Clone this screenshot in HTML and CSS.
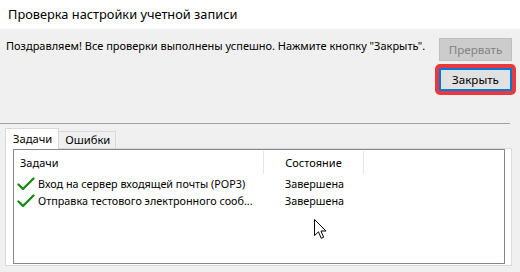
FILE: index.html
```html
<!DOCTYPE html>
<html lang="ru">
<head>
<meta charset="utf-8">
<title>Проверка настройки учетной записи</title>
<link rel="stylesheet" href="styles.css">
</head>
<body>
<div class="window">
  <div class="titlebar">Проверка настройки учетной записи</div>
  <div class="top">
    <div class="message">Поздравляем! Все проверки выполнены успешно. Нажмите кнопку "Закрыть".</div>
    <div class="buttons">
      <button class="btn btn-disabled" disabled>Прервать</button>
      <button class="btn btn-default highlighted">Закрыть</button>
    </div>
  </div>
  <div class="separator"></div>
  <div class="tabs">
    <div class="tab tab-active">Задачи</div>
    <div class="tab">Ошибки</div>
  </div>
  <div class="panel">
    <div class="listview">
      <div class="lv-header">
        <div class="col col-task">Задачи</div>
        <div class="col col-state">Состояние</div>
        <div class="col col-rest"></div>
      </div>
      <div class="lv-row">
        <div class="col col-task">
          <svg class="check" viewBox="0 0 18 14" width="18" height="14"><path d="M1.5 7.5 L6 12 L16.5 1.5" fill="none" stroke="#1b8a1b" stroke-width="2.4" stroke-linecap="round" stroke-linejoin="round"/></svg>
          <span class="task-name">Вход на сервер входящей почты (POP3)</span>
        </div>
        <div class="col col-state">Завершена</div>
      </div>
      <div class="lv-row">
        <div class="col col-task">
          <svg class="check" viewBox="0 0 18 14" width="18" height="14"><path d="M1.5 7.5 L6 12 L16.5 1.5" fill="none" stroke="#1b8a1b" stroke-width="2.4" stroke-linecap="round" stroke-linejoin="round"/></svg>
          <span class="task-name">Отправка тестового электронного сооб...</span>
        </div>
        <div class="col col-state">Завершена</div>
      </div>
    </div>
  </div>
  <svg class="cursor" viewBox="0 0 13 21" width="13" height="21"><path d="M0.5 0.5 L0.5 16.5 L4.5 12.8 L7.2 19.3 L9.6 18.3 L7 12 L12 12 Z" fill="#fff" stroke="#000" stroke-width="1" stroke-linejoin="miter"/></svg>
</div>
</body>
</html>
```

FILE: styles.css
```css
html, body {
  margin: 0;
  padding: 0;
}
body {
  width: 520px;
  height: 272px;
  overflow: hidden;
  background: #f0f0f0;
  font-family: "Noto Sans", "Open Sans", sans-serif;
  font-size: 11px;
  color: #000;
}
.window {
  position: relative;
  width: 520px;
  height: 272px;
  display: flex;
  flex-direction: column;
}
.titlebar {
  height: 29px;
  line-height: 29px;
  background: #fff;
  padding-left: 8px;
  font-size: 12.8px;
  flex: none;
}
.top {
  height: 94px;
  display: flex;
  flex: none;
  padding: 0 8px 0 6px;
  box-sizing: border-box;
}
.message {
  flex: 1;
  margin-top: 9px;
  line-height: 16px;
  white-space: nowrap;
}
.buttons {
  display: flex;
  flex-direction: column;
  gap: 7px;
  margin-top: 9px;
}
.btn {
  width: 73px;
  height: 23px;
  box-sizing: border-box;
  font-family: inherit;
  font-size: 11.6px;
  padding: 0;
  margin: 0;
}
.btn-disabled {
  background: #cccccc;
  border: 1px solid #bfbfbf;
  color: #838383;
}
.btn-default {
  background: #e1e1e1;
  border: 2px solid #0078d7;
  color: #000;
}
.highlighted {
  position: relative;
}
.highlighted::after {
  content: "";
  position: absolute;
  left: -6px;
  right: -6px;
  top: -6px;
  bottom: -6px;
  border: 4px solid #e9393f;
  border-radius: 5px;
}
.separator {
  height: 1px;
  width: 510px;
  background: #a0a0a0;
  flex: none;
}
.tabs {
  display: flex;
  align-items: flex-end;
  height: 24px;
  padding-left: 5px;
  flex: none;
  position: relative;
  z-index: 1;
  font-size: 11.2px;
}
.tab {
  height: 17px;
  line-height: 16px;
  box-sizing: border-box;
  border: 1px solid #d9d9d9;
  border-bottom: none;
  border-left: none;
  padding: 0 5px 0 6px;
  background: #f0f0f0;
}
.tab-active {
  height: 21px;
  line-height: 19px;
  background: #fff;
  border-left: 1px solid #d9d9d9;
  padding: 0 6px 0 7px;
  margin-bottom: -1px;
}
.panel {
  margin-left: 5px;
  width: 507px;
  height: 118px;
  box-sizing: border-box;
  border: 1px solid #d9d9d9;
  background: #fff;
  padding: 0 6px 1px 7px;
  flex: none;
  display: flex;
}
.listview {
  flex: 1;
  border: 1px solid #828790;
  background: #fff;
}
.lv-header {
  display: flex;
  height: 24px;
  padding-top: 1px;
}
.lv-header .col {
  border-right: 1px solid #e5e5e5;
  line-height: 23px;
  height: 23px;
}
.lv-header .col-task {
  padding-left: 6px;
}
.lv-header .col-rest {
  border-right: none;
  flex: 1;
}
.col-task {
  width: 250px;
  box-sizing: border-box;
  display: flex;
  align-items: center;
}
.col-state {
  width: 100px;
  box-sizing: border-box;
  text-align: center;
}
.lv-row {
  display: flex;
  height: 17px;
  line-height: 17px;
  font-size: 10.8px;
}
.lv-row .col-state {
  padding-left: 1px;
}
.check {
  margin-left: 3px;
  margin-right: 3px;
  flex: none;
}
.task-name {
  white-space: nowrap;
}
.cursor {
  position: absolute;
  left: 314px;
  top: 219px;
}
```
